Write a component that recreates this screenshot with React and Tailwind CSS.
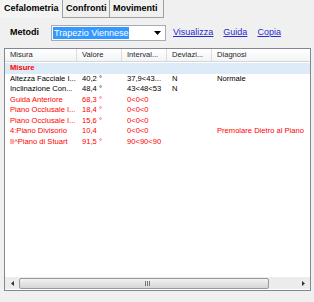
import React from "react";

const rows = [
  { m: "Altezza Facciale I...", v: "40,2 °", i: "37,9<43...", d: "N", g: "Normale", red: false },
  { m: "Inclinazione Con...", v: "48,4 °", i: "43<48<53", d: "N", g: "", red: false },
  { m: "Guida Anteriore", v: "68,3 °", i: "0<0<0", d: "", g: "", red: true },
  { m: "Piano Occlusale I...", v: "18,4 °", i: "0<0<0", d: "", g: "", red: true },
  { m: "Piano Occlusale I...", v: "15,6 °", i: "0<0<0", d: "", g: "", red: true },
  { m: "4:Piano Divisorio", v: "10,4", i: "0<0<0", d: "", g: "Premolare Dietro al Piano", red: true },
  { m: "II^Piano di Stuart", v: "91,5 °", i: "90<90<90", d: "", g: "", red: true },
];

function Cell({ w, children, cls = "" }) {
  return (
    <div className={`shrink-0 overflow-hidden whitespace-nowrap pl-[5px] ${w} ${cls}`}>{children}</div>
  );
}

export default function App() {
  return (
    <div className="w-[314px] h-[302px] bg-[#f0f0f0] font-['Liberation_Sans',Arial,sans-serif] text-black overflow-hidden">
      {/* Tabs */}
      <div className="flex h-[18px] text-[9px] font-bold leading-[17px]">
        <div className="w-[63px] pl-[4px] border-r border-[#a0a0a0] bg-[#f4f4f4]">Cefalometria</div>
        <div className="w-[47px] pl-[3px] border-r border-[#a0a0a0] border-b bg-[#f0f0f0]">Confronti</div>
        <div className="w-[54px] pl-[3px] border-r border-[#a0a0a0] border-b bg-[#f0f0f0]">Movimenti</div>
        <div className="flex-1" />
      </div>

      {/* Metodi row */}
      <div className="flex items-center h-[16px] mt-[7px]">
        <div className="w-[51px] pl-[10px] text-[9px] font-bold">Metodi</div>
        <div className="w-[115px] h-[16px] border border-[#a5acb5] bg-white flex items-center px-[1px]">
          <div className="w-[76px] h-[12px] bg-[#3399ff] text-white text-[9px] leading-[12px] pl-[1px]">Trapezio Viennese</div>
          <div className="flex-1" />
          <div className="w-[13px] h-[12px] flex items-center justify-center">
            <svg width="7" height="4" viewBox="0 0 7 4"><path d="M0 0h7L3.5 4z" fill="#000" /></svg>
          </div>
        </div>
        <div className="flex gap-[10px] ml-[7px] text-[9px] text-[#2a2ad0] underline">
          <span>Visualizza</span>
          <span>Guida</span>
          <span>Copia</span>
        </div>
      </div>

      {/* List view */}
      <div className="ml-[4px] mt-[7px] w-[307px] h-[243px] border border-[#828790] bg-white flex flex-col text-[7.6px]">
        <div className="flex h-[13px] leading-[12px] border-b border-[#d5d5d5] bg-gradient-to-b from-white to-[#f3f4f6] text-[#1e1e1e]">
          <Cell w="w-[72px] border-r border-[#dcdcdc]">Misura</Cell>
          <Cell w="w-[45px] border-r border-[#dcdcdc]">Valore</Cell>
          <Cell w="w-[45px] border-r border-[#dcdcdc]">Interval...</Cell>
          <Cell w="w-[45px] border-r border-[#dcdcdc]">Deviazi...</Cell>
          <Cell w="flex-1">Diagnosi</Cell>
        </div>
        <div className="pt-[1px]">
          <div className="h-[10.5px] leading-[10.5px] bg-[#dcebf7] text-[#ff0000] font-bold pl-[5px]">Misure</div>
          {rows.map((r, k) => (
            <div key={k} className={`flex h-[10.5px] leading-[10.5px] ${r.red ? "text-[#ff0000]" : "text-black"}`}>
              <Cell w="w-[72px]">{r.m}</Cell>
              <Cell w="w-[45px]">{r.v}</Cell>
              <Cell w="w-[45px]">{r.i}</Cell>
              <Cell w="w-[45px]">{r.d}</Cell>
              <Cell w="flex-1">{r.g}</Cell>
            </div>
          ))}
        </div>
        <div className="flex-1" />
        {/* horizontal scrollbar */}
        <div className="h-[12px] mb-[1px] flex items-center bg-[#ececec]">
          <div className="w-[14px] h-[12px] flex items-center justify-center">
            <svg width="3" height="5" viewBox="0 0 3 5"><path d="M3 0v5L0 2.5z" fill="#333" /></svg>
          </div>
          <div className="w-[250px] h-[11px] rounded-[2px] border border-[#9a9a9a] bg-gradient-to-b from-[#f2f2f2] to-[#d6d6d6] flex items-center justify-center">
            <div className="flex gap-[1px] ml-[240px] translate-x-[-117px]">
              <div className="w-[1px] h-[5px] bg-[#777]" />
              <div className="w-[1px] h-[5px] bg-[#777]" />
              <div className="w-[1px] h-[5px] bg-[#777]" />
            </div>
          </div>
          <div className="flex-1" />
          <div className="w-[14px] h-[12px] flex items-center justify-center">
            <svg width="3" height="5" viewBox="0 0 3 5"><path d="M0 0v5L3 2.5z" fill="#333" /></svg>
          </div>
        </div>
      </div>
    </div>
  );
}
